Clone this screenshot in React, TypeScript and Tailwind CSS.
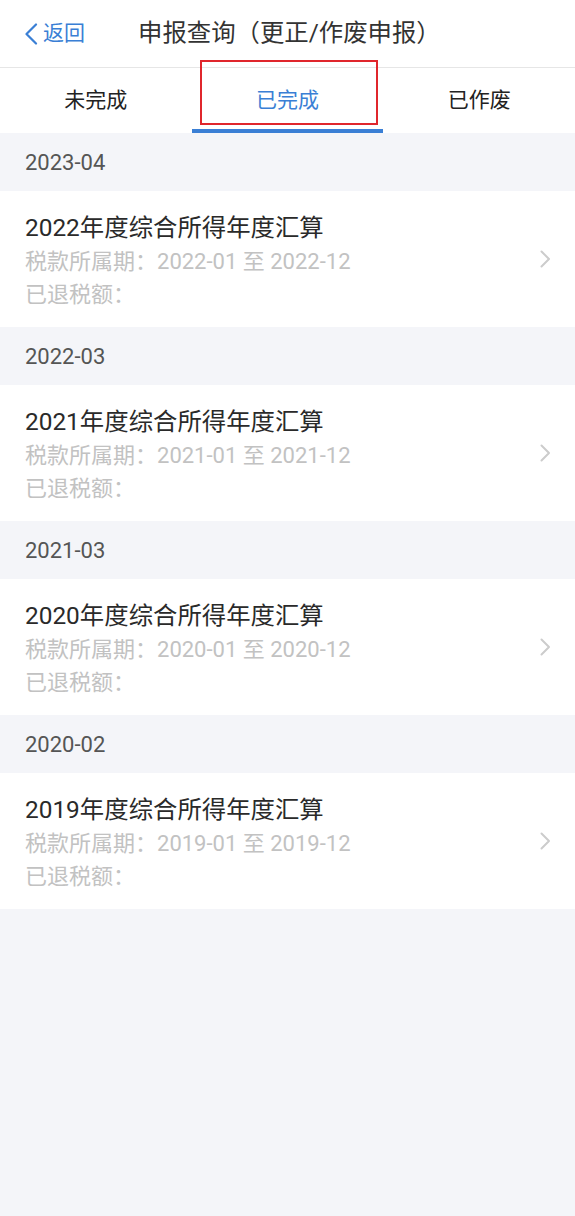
const records = [
  { month: "2023-04", year: "2022" },
  { month: "2022-03", year: "2021" },
  { month: "2021-03", year: "2020" },
  { month: "2020-02", year: "2019" },
]

const tabs = ["未完成", "已完成", "已作废"]

export default function App() {
  return (
    <div
      className="min-h-[1216px] bg-[#f4f5f9] text-[#333]"
      style={{ fontFamily: 'Roboto, "Noto Sans CJK SC", sans-serif' }}
    >
      {/* Header */}
      <div className="h-[68px] bg-white flex items-center border-b border-[#e6e6e6]">
        <div className="flex items-center pl-[24px] w-[138px] text-[#3a7fd5]">
          <svg width="14" height="22" viewBox="0 0 14 22" fill="none" className="mr-[5px]">
            <polyline points="12,1.5 2.5,11 12,20.5" stroke="currentColor" strokeWidth="2.2" strokeLinecap="round" strokeLinejoin="round" />
          </svg>
          <span className="text-[21px]">返回</span>
        </div>
        <div className="text-[24.4px] text-[#333]">申报查询（更正/作废申报）</div>
      </div>

      {/* Tabs */}
      <div className="h-[65px] bg-white grid grid-cols-3">
        {tabs.map((t, i) => (
          <div key={t} className="relative flex items-center justify-center">
            <span className={`text-[21px] ${i === 1 ? "text-[#3a7fd5]" : "text-[#222]"}`}>{t}</span>
            {i === 1 && (
              <>
                <div className="absolute left-0 right-0 bottom-0 h-[4px] bg-[#3a7fd5]" />
                <div className="absolute left-[8px] right-[5px] top-[-8px] bottom-[8px] border-2 border-[#e0262c]" />
              </>
            )}
          </div>
        ))}
      </div>

      {/* List */}
      {records.map((r) => (
        <div key={r.month}>
          <div className="h-[58px] flex items-center pl-[25px] text-[22px] text-[#555]">{r.month}</div>
          <div className="h-[136px] bg-white flex items-center pl-[25px] pr-[24px]">
            <div className="flex-1 flex flex-col pt-[4px]">
              <div className="text-[24.4px] leading-[34px] text-[#2a2a2a]">{r.year}年度综合所得年度汇算</div>
              <div className="text-[22px] leading-[33px] text-[#c2c2c2]">
                税款所属期：{r.year}-01 至 {r.year}-12
              </div>
              <div className="text-[22px] leading-[33px] text-[#c2c2c2]">已退税额：</div>
            </div>
            <svg width="12" height="18" viewBox="0 0 12 18" fill="none" className="text-[#cccccc]">
              <polyline points="2.5,1.5 10,9 2.5,16.5" stroke="currentColor" strokeWidth="2" strokeLinecap="round" strokeLinejoin="round" />
            </svg>
          </div>
        </div>
      ))}
    </div>
  )
}
